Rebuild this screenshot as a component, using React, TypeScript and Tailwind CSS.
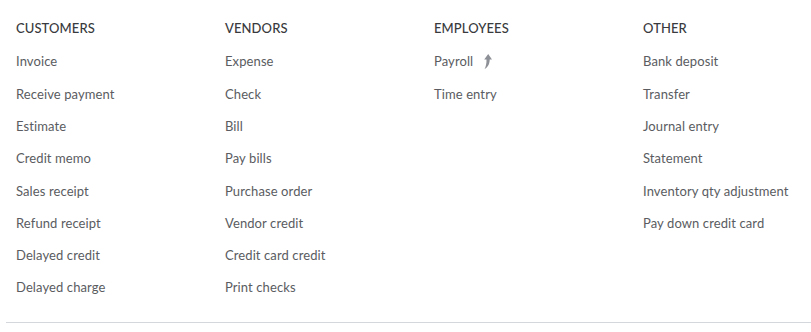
const columns: { title: string; items: string[] }[] = [
  {
    title: 'CUSTOMERS',
    items: [
      'Invoice',
      'Receive payment',
      'Estimate',
      'Credit memo',
      'Sales receipt',
      'Refund receipt',
      'Delayed credit',
      'Delayed charge',
    ],
  },
  {
    title: 'VENDORS',
    items: [
      'Expense',
      'Check',
      'Bill',
      'Pay bills',
      'Purchase order',
      'Vendor credit',
      'Credit card credit',
      'Print checks',
    ],
  },
  {
    title: 'EMPLOYEES',
    items: ['Payroll', 'Time entry'],
  },
  {
    title: 'OTHER',
    items: [
      'Bank deposit',
      'Transfer',
      'Journal entry',
      'Statement',
      'Inventory qty adjustment',
      'Pay down credit card',
    ],
  },
];

// upgrade badge next to Payroll: curved up arrow
function UpgradeArrow() {
  return (
    <svg width="9" height="15" viewBox="0 0 9 15" className="ml-[10px] -mt-[2px]">
      <path
        d="M5.2 0 L9 5.4 L6.7 5.4 C6.6 9.4 5.4 12.6 1.6 15 C3 12.2 3.6 9 3.5 5.4 L1.2 5.4 Z"
        fill="#8d9096"
      />
    </svg>
  );
}

export default function App() {
  return (
    <div className="w-[811px] h-[332px] bg-white overflow-hidden" style={{ fontFamily: 'Lato, "Noto Sans", sans-serif' }}>
      <div className="flex pl-4 pt-[18px]">
        {columns.map((col, i) => (
          <div key={col.title} className={i < 3 ? 'w-[209px] shrink-0' : 'flex-1'}>
            <div className="h-5 leading-5 text-[13px] font-medium text-[#393a3d] tracking-[0.1px]">
              {col.title}
            </div>
            <ul className="mt-2">
              {col.items.map(item => (
                <li key={item} className="flex items-center h-[32.3px] text-[13px] text-[#5a5c61] tracking-[0.1px] whitespace-nowrap">
                  {item}
                  {item === 'Payroll' && <UpgradeArrow />}
                </li>
              ))}
            </ul>
          </div>
        ))}
      </div>
      <div className="ml-[6px] mt-[18px] border-t border-[#d4d7dc]" />
    </div>
  );
}
